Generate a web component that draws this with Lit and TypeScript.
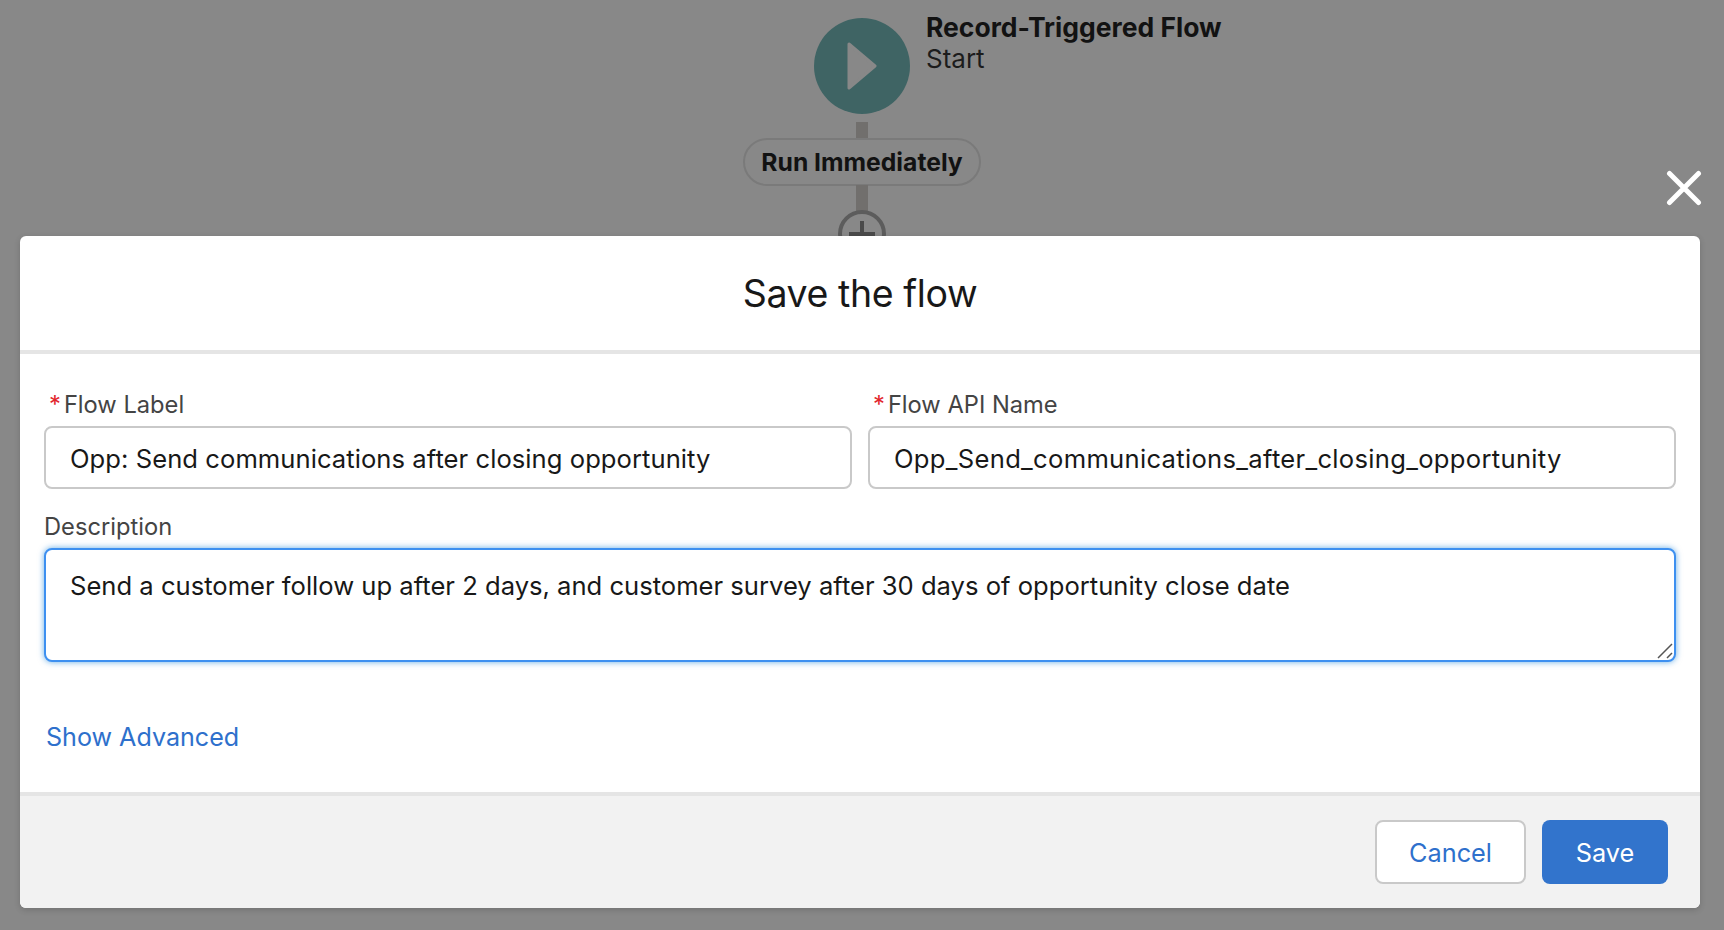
import { LitElement, html, css } from "lit";
import { customElement } from "lit/decorators.js";

@customElement("app-root")
export class AppRoot extends LitElement {
  static styles = css`
    :host {
      display: block;
      width: 1724px;
      height: 930px;
      position: relative;
      overflow: hidden;
      background: #888888;
      font-family: Inter, "Liberation Sans", sans-serif;
      color: #181818;
      -webkit-font-smoothing: antialiased;
    }
    .canvas { position: absolute; inset: 0; }
    .start { position: absolute; left: 814px; top: 18px; width: 96px; height: 96px; border-radius: 50%; background: #3f6464; display: flex; align-items: center; justify-content: center; }
    .start svg { display: block; }
    .title { position: absolute; left: 926px; top: 11px; }
    .title b { display: block; font-size: 26.5px; line-height: 32px; font-weight: 700; color: #121212; }
    .title span { display: block; font-size: 26px; line-height: 32px; color: #1c1c1c; }
    .line { position: absolute; left: 856px; width: 12px; background: #716f6d; }
    .l1 { top: 122px; height: 17px; }
    .l2 { top: 185px; height: 27px; }
    .pill { position: absolute; left: 743px; top: 138px; width: 238px; height: 48px; box-sizing: border-box; border: 2px solid #7a7a7a; border-radius: 24px; background: #888888; display: flex; align-items: center; justify-content: center; font-size: 24.7px; font-weight: 700; color: #121212; }
    .plus { position: absolute; left: 838px; top: 210px; width: 48px; height: 48px; }
    .close { position: absolute; left: 1666px; top: 170px; width: 36px; height: 36px; }
    .modal { position: absolute; left: 20px; top: 236px; width: 1680px; height: 672px; display: flex; flex-direction: column; border-radius: 6px; background: #fff; box-shadow: 0 2px 6px rgba(0,0,0,.16); overflow: hidden; }
    .head { flex: none; height: 114px; padding-top: 1px; box-sizing: border-box; height: 118px; border-bottom: 4px solid #e5e5e5; display: flex; align-items: center; justify-content: center; font-size: 37.5px; font-weight: 400; letter-spacing: -0.4px; color: #181818; }
    .body { flex: 1; display: flex; flex-direction: column; padding: 0 24px; }
    .row { display: grid; grid-template-columns: 808px 808px; gap: 16px; margin-top: 32px; }
    .label { display: flex; align-items: center; height: 37px; margin-bottom: 3px; font-size: 23.7px; line-height: 37px; color: #444444; }
    .req { color: #e2252b; margin: 0 3px 0 5px; }
    .input { box-sizing: border-box; height: 63px; border: 2px solid #c9c9c9; border-radius: 8px; padding: 2px 24px 0; display: flex; align-items: center; font-size: 25.6px; letter-spacing: 0.05px; color: #181818; background: #fff; }
    .api { letter-spacing: 0.3px; }
    .desc-label { margin-top: 19px; }
    .area { position: relative; box-sizing: border-box; height: 114px; border: 2px solid #3e90f0; border-radius: 8px; box-shadow: 0 0 6px #0176d399; padding: 20px 24px 0; font-size: 25.6px; line-height: 32px; color: #181818; background: #fff; }
    .grip { position: absolute; right: 1px; bottom: 1px; width: 16px; height: 16px; }
    .link { margin-top: 59px; margin-left: 2px; font-size: 25.1px; line-height: 32px; color: #2e70cc; }
    .foot { flex: none; height: 116px; box-sizing: border-box; border-top: 4px solid #e5e5e5; background: #f2f2f2; display: flex; align-items: flex-start; justify-content: flex-end; gap: 16px; padding: 24px 32px 0 0; }
    .btn { box-sizing: border-box; height: 64px; border-radius: 8px; display: flex; align-items: center; justify-content: center; font-size: 25.3px; }
    .cancel { width: 151px; background: #fff; border: 2px solid #c9c9c9; color: #2e70cc; }
    .save { width: 126px; background: #3274cc; color: #fff; }
  `;

  render() {
    return html`
      <div class="canvas">
        <div class="start">
          <svg width="30" height="48" viewBox="0 0 30 48">
            <path d="M2 2 L28 24 L2 46 Z" fill="#888888" stroke="#888888" stroke-width="3" stroke-linejoin="round"/>
          </svg>
        </div>
        <div class="title"><b>Record-Triggered Flow</b><span>Start</span></div>
        <div class="line l1"></div>
        <div class="pill">Run Immediately</div>
        <div class="line l2"></div>
        <svg class="plus" viewBox="0 0 48 48">
          <circle cx="24" cy="24" r="22" fill="#888888" stroke="#5c5c5c" stroke-width="4"/>
          <path d="M24 11V37M11 24H37" stroke="#4a4a4a" stroke-width="4"/>
        </svg>
      </div>
      <svg class="close" viewBox="0 0 36 36">
        <path d="M3.5 3.5L32.5 32.5M32.5 3.5L3.5 32.5" stroke="#fff" stroke-width="5" stroke-linecap="round"/>
      </svg>
      <div class="modal">
        <div class="head">Save the flow</div>
        <div class="body">
          <div class="row">
            <div>
              <div class="label"><span class="req">*</span>Flow Label</div>
              <div class="input">Opp: Send communications after closing opportunity</div>
            </div>
            <div>
              <div class="label"><span class="req">*</span>Flow API Name</div>
              <div class="input api">Opp_Send_communications_after_closing_opportunity</div>
            </div>
          </div>
          <div class="label desc-label">Description</div>
          <div class="area">
            Send a customer follow up after 2 days, and customer survey after 30 days of opportunity close date
            <svg class="grip" viewBox="0 0 16 16">
              <path d="M1 15L15 1M10 15L15 10" stroke="#555" stroke-width="1.5" fill="none"/>
            </svg>
          </div>
          <div class="link">Show Advanced</div>
        </div>
        <div class="foot">
          <div class="btn cancel">Cancel</div>
          <div class="btn save">Save</div>
        </div>
      </div>
    `;
  }
}
